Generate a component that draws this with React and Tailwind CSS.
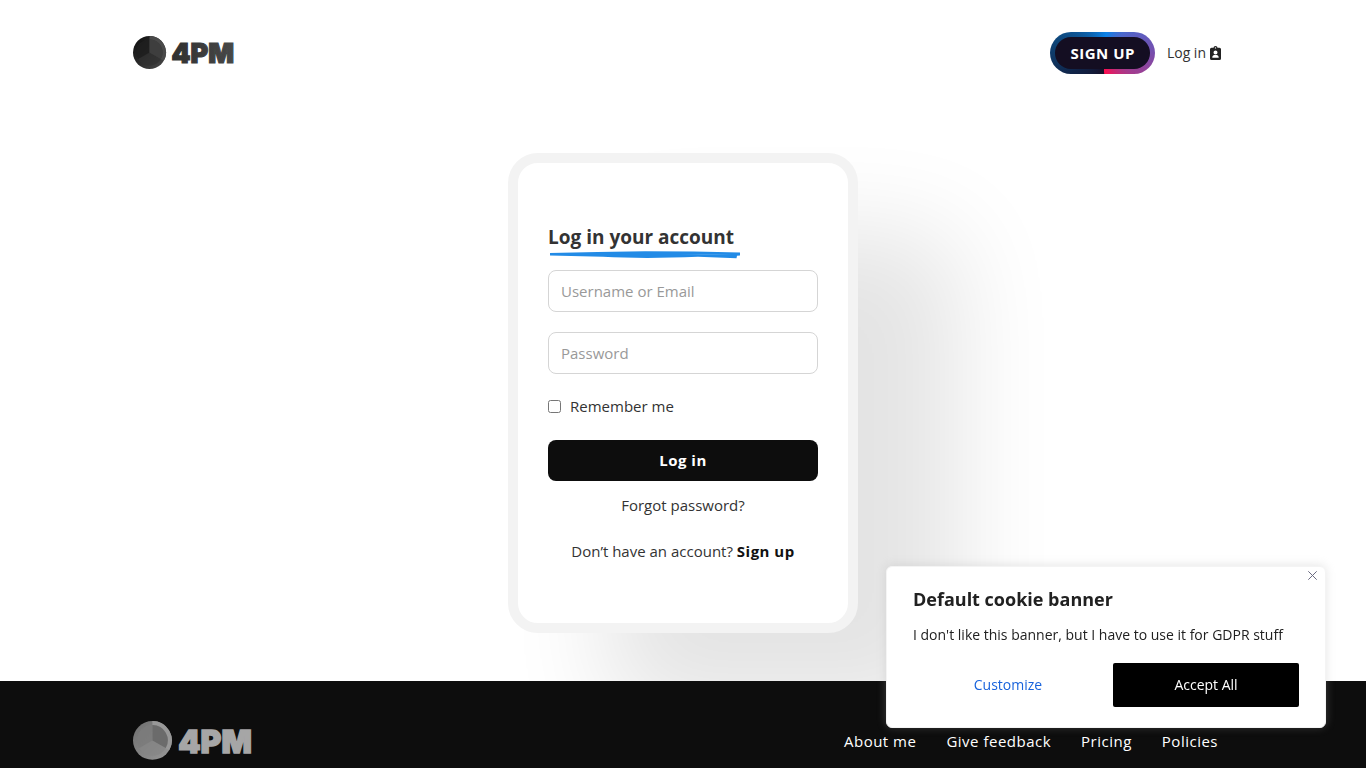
import React, { useState } from 'react';

const footerLinks = ['About me', 'Give feedback', 'Pricing', 'Policies'];

function Logo({ light = false, className }) {
  const id = light ? 'logo-light' : 'logo-dark';
  const colors = light
    ? { from: '#6e6e6e', to: '#989898', inner: '#868686', dark: '#777777', slice: '#6b6b6b', text: '#a6a6a6', textEnd: '#a6a6a6' }
    : { from: '#0c0c0c', to: '#4a4a4a', inner: '#303030', dark: '#161616', slice: '#3e3e3e', text: '#303030', textEnd: '#484848' };

  return (
    <svg viewBox="0 0 102 34" className={className} role="img" aria-label="4PM">
      <defs>
        <linearGradient id={id} x1="0" y1="0" x2="1" y2="1">
          <stop offset="0" stopColor={colors.from} />
          <stop offset="1" stopColor={colors.to} />
        </linearGradient>
        <linearGradient id={`${id}-text`} x1="0" y1="0" x2="1" y2="0">
          <stop offset="0" stopColor={colors.text} />
          <stop offset="1" stopColor={colors.textEnd} />
        </linearGradient>
      </defs>
      {/* Clock face with the 12 to 4 slice */}
      <circle cx="16.500" cy="16.500" r="16.500" fill={`url(#${id})`} />
      <path d="M16.500 16.500V0A16.500 16.500 0 0 1 30.800 24.800Z" fill={colors.to} />
      <circle cx="16.500" cy="16.500" r="13" fill={colors.inner} opacity="0.7" />
      <path d="M16.500 16.500V3.500A13 13 0 0 0 5.200 23Z" fill={colors.dark} opacity="0.6" />
      <path d="M16.500 16.500V3.500A13 13 0 0 1 27.800 23Z" fill={colors.slice} />
      <text x="38.500" y="27" fontFamily="Inter, sans-serif" fontWeight="900" fontSize="27" fill={`url(#${id}-text)`} stroke={`url(#${id}-text)`} strokeWidth="1.200">4PM</text>
    </svg>
  );
}

function LoginIcon() {
  return (
    <svg viewBox="0 0 11 14" className="h-3.5 w-[11px]" fill="#222" aria-hidden="true">
      <path fillRule="evenodd" d="M1.500 1.800H3.500a2 1.800 0 0 1 4 0h2A1.500 1.500 0 0 1 11 3.300v9.200A1.500 1.500 0 0 1 9.500 14h-8A1.500 1.500 0 0 1 0 12.500V3.300A1.500 1.500 0 0 1 1.500 1.800ZM5.500 1.200a.7.700 0 1 0 0 1.400.7.700 0 0 0 0-1.400Zm0 3.300a2 2 0 1 0 0 4 2 2 0 0 0 0-4ZM2.300 11.700h6.400c0-1.600-.9-2.600-2.100-2.600H4.400c-1.200 0-2.100 1-2.100 2.600Z" />
    </svg>
  );
}

export default function App() {
  const [username, setUsername] = useState('');
  const [password, setPassword] = useState('');
  const [remember, setRemember] = useState(false);
  const [showBanner, setShowBanner] = useState(true);

  return (
    <div className="h-screen overflow-hidden bg-white font-['Open_Sans',sans-serif] text-[15px] text-[#333]">
      {/* Header */}
      <header className="mx-auto flex max-w-[1100px] items-center justify-between py-8 pr-3">
        <a href="#">
          <Logo className="h-[34px] w-[102px]" />
        </a>
        <nav className="flex items-center gap-3">
          <a
            href="#"
            className="rounded-full bg-[conic-gradient(from_176deg,#160f28_0deg,#102347_60deg,#0e4679_110deg,#0b82e8_195deg,#4a68cc_230deg,#7350b0_270deg,#a53a8c_310deg,#ff0c4e_358deg,#160f28_360deg)] p-[5px]"
          >
            <span className="block rounded-full bg-[#140e22] px-[15px] py-1 font-bold leading-6 tracking-[0.5px] text-white">SIGN UP</span>
          </a>
          <a href="#" className="flex items-center gap-1 text-sm">
            Log in
            <LoginIcon />
          </a>
        </nav>
      </header>

      {/* Login card */}
      <main className="flex justify-center px-4 pt-[47px] pb-12">
        <form
          onSubmit={(e) => e.preventDefault()}
          className="w-[350px] rounded-[30px] border-10 border-[#f3f3f3] bg-white px-[30px] py-[60px] shadow-[100px_80px_100px_rgba(0,0,0,0.11)]"
        >
          <h1 className="text-[19px] font-bold leading-7">Log in your account</h1>
          <svg viewBox="0 0 192 8" className="h-2 w-48" fill="#228be6" aria-hidden="true">
            <path d="M2 2Q50 .8 97 .2q50 0 95 1.300v3l-3 .2-.5 2.500L150 5.800Q96 8 55 5.800L2 4.600Z" />
            <path d="M130 3.600Q160 2.800 184 4Q160 3.300 130 3.600Z" fill="#79baf2" />
          </svg>
          <input
            type="text"
            aria-label="Username or Email"
            placeholder="Username or Email"
            value={username}
            onChange={(e) => setUsername(e.target.value)}
            className="mt-[11px] block h-[42px] w-full rounded-lg border border-[#d5d5d5] px-3 outline-none placeholder:text-[#999] focus:border-[#228be6]"
          />
          <input
            type="password"
            aria-label="Password"
            placeholder="Password"
            value={password}
            onChange={(e) => setPassword(e.target.value)}
            className="mt-5 block h-[42px] w-full rounded-lg border border-[#d5d5d5] px-3 outline-none placeholder:text-[#999] focus:border-[#228be6]"
          />
          <label className="mt-5 flex items-center gap-[9px] leading-6">
            <input type="checkbox" checked={remember} onChange={(e) => setRemember(e.target.checked)} className="size-[13px]" />
            Remember me
          </label>
          <button type="submit" className="mt-[22px] h-[41px] w-full rounded-lg bg-[#0d0d0d] font-bold tracking-[0.5px] text-white">
            Log in
          </button>
          <p className="mt-3 text-center leading-6">
            <a href="#">Forgot password?</a>
          </p>
          <p className="mt-[22px] text-center leading-6">
            Don’t have an account? <a href="#" className="font-bold tracking-[0.5px] text-[#111]">Sign up</a>
          </p>
        </form>
      </main>

      {/* Footer */}
      <footer className="relative h-full bg-[#0d0d0d]">
        <div className="mx-auto flex max-w-[1100px] items-center justify-between pt-10 pr-[15px]">
          <Logo light className="h-10 w-[120px]" />
          <nav className="flex gap-[30px] leading-6 tracking-[0.5px] text-white">
            {footerLinks.map((link) => (
              <a key={link} href="#">{link}</a>
            ))}
          </nav>
        </div>
      </footer>

      {/* Cookie banner */}
      {showBanner && (
        <section
          aria-label="Cookie consent"
          className="fixed right-10 bottom-10 w-[440px] rounded-md border border-[#f4f4f4] bg-white px-[26px] py-5 text-[#212121] shadow-[0_-1px_10px_rgba(172,171,171,0.3)]"
        >
          <button type="button" aria-label="Close" onClick={() => setShowBanner(false)} className="absolute top-1 right-2">
            <svg viewBox="0 0 9 9" className="block size-[9px]" stroke="#6b6b80" strokeWidth="1" aria-hidden="true">
              <path d="M.3.3l8.400 8.400M8.700.3L.3 8.700" />
            </svg>
          </button>
          <h2 className="text-lg font-bold leading-6">Default cookie banner</h2>
          <p className="mt-3 text-sm leading-6">I don't like this banner, but I have to use it for GDPR stuff</p>
          <div className="mt-4 grid grid-cols-[1fr_186px] gap-2.5 text-sm">
            <button type="button" className="h-11 rounded-xs text-[#1863dc]">Customize</button>
            <button type="button" onClick={() => setShowBanner(false)} className="h-11 rounded-xs bg-black text-white">Accept All</button>
          </div>
        </section>
      )}
    </div>
  );
}
